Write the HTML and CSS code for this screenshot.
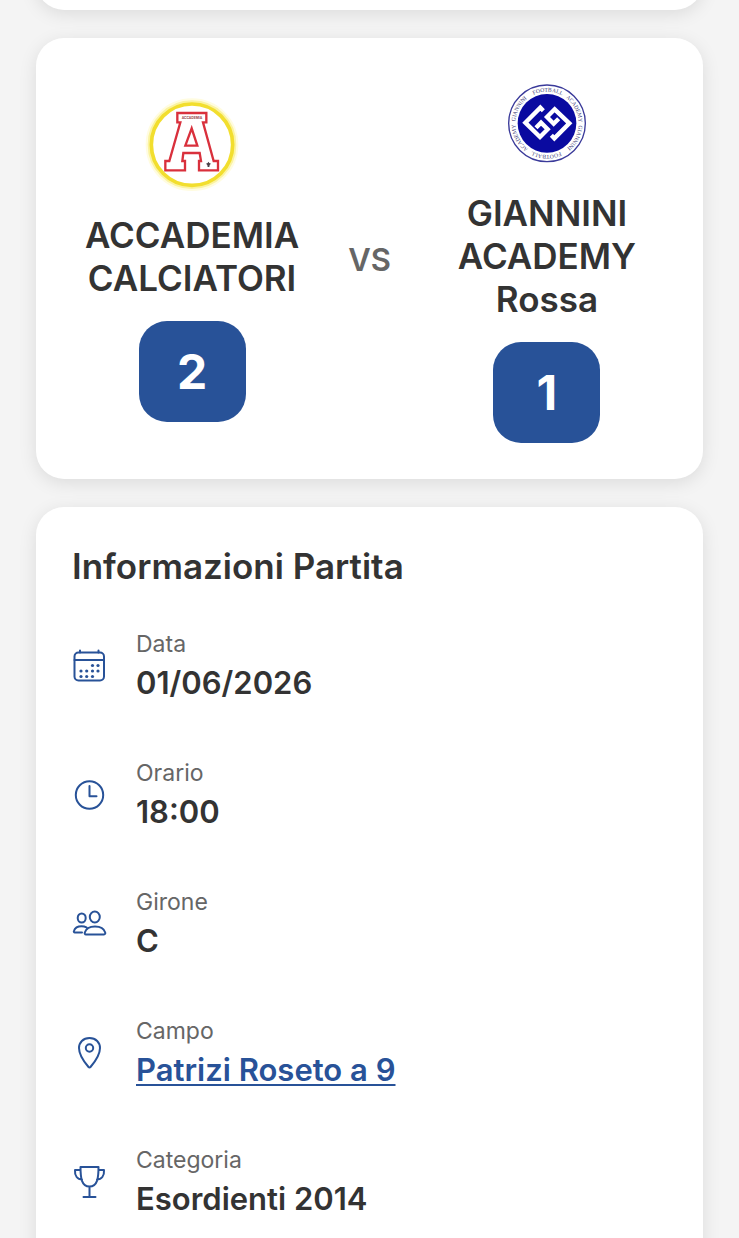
FILE: index.html
```html
<!DOCTYPE html>
<html lang="it">
<head>
<meta charset="utf-8">
<meta name="viewport" content="width=device-width, initial-scale=1">
<title>Dettaglio partita</title>
<link rel="stylesheet" href="styles.css">
</head>
<body>
<main class="page">
  <div class="card card-previous"></div>

  <section class="card match">
    <div class="team">
      <svg class="team-logo" viewBox="31 46 312 312" role="img" aria-label="Accademia Calciatori">
        <circle class="crest-halo" cx="187" cy="192" r="126"/>
        <circle class="crest-glow" cx="187" cy="192" r="125"/>
        <circle class="crest-ring" cx="187" cy="192" r="122"/>
        <path class="crest-letter" fill-rule="evenodd" d="M143 97H230V125H220L252 241H265V269H208V241H214L210 217H161L158 241H166V269H107V241H119L152 125H143ZM186 143L167 195H203Z"/>
        <text class="crest-name" x="187" y="114">ACCADEMIA</text>
        <path class="crest-mark" d="M236 243l3 4 5 2-4 4-1 6h-5l-1-6-4-4 5-2z"/>
      </svg>
      <h2 class="team-name">ACCADEMIA CALCIATORI</h2>
      <div class="score">2</div>
    </div>
    <div class="versus">VS</div>
    <div class="team">
      <svg class="team-logo" viewBox="15 12 312 312" role="img" aria-label="Giannini Football Academy">
        <defs><path id="ring" d="M76 160A95 95 0 0 1 266 160A95 95 0 0 1 76 160"/></defs>
        <circle class="badge-edge" cx="171" cy="160" r="115"/>
        <circle class="badge-core" cx="171" cy="160" r="88"/>
        <text class="badge-text"><textPath href="#ring" startOffset="1%">GIANNINI</textPath></text>
        <text class="badge-text"><textPath href="#ring" startOffset="18%">FOOTBALL</textPath></text>
        <text class="badge-text"><textPath href="#ring" startOffset="35%">ACADEMY</textPath></text>
        <text class="badge-text"><textPath href="#ring" startOffset="51%">GIANNINI</textPath></text>
        <text class="badge-text"><textPath href="#ring" startOffset="68%">FOOTBALL</textPath></text>
        <text class="badge-text"><textPath href="#ring" startOffset="85%">ACADEMY</textPath></text>
        <path class="badge-mono" d="M160 122L151 113L106 158L150 201L173 178L153 158L138 173M184 196L193 205L238 160L194 118L171 141L191 161L206 146"/>
      </svg>
      <h2 class="team-name">GIANNINI ACADEMY Rossa</h2>
      <div class="score">1</div>
    </div>
  </section>

  <section class="card info">
    <h1 class="info-title">Informazioni Partita</h1>
    <dl class="info-list">
      <div class="info-row">
        <svg class="icon" viewBox="0 0 36 36" aria-hidden="true"><rect x="2.500" y="4.500" width="29.500" height="28" rx="4"/><path d="M2.500 12H32M8 2.500V4.500M26.500 2.500V4.500"/><g class="dots"><circle cx="20.500" cy="17.500" r="1.600"/><circle cx="26" cy="17.500" r="1.600"/><circle cx="9" cy="23" r="1.600"/><circle cx="14.700" cy="23" r="1.600"/><circle cx="20.500" cy="23" r="1.600"/><circle cx="26" cy="23" r="1.600"/><circle cx="9" cy="28.500" r="1.600"/><circle cx="14.700" cy="28.500" r="1.600"/><circle cx="20.500" cy="28.500" r="1.600"/></g></svg>
        <div class="info-text"><dt>Data</dt><dd>01/06/2026</dd></div>
      </div>
      <div class="info-row">
        <svg class="icon" viewBox="0 0 36 36" aria-hidden="true"><circle cx="17.500" cy="18" r="13.700"/><path d="M17.500 9V19.300H24.500"/></svg>
        <div class="info-text"><dt>Orario</dt><dd>18:00</dd></div>
      </div>
      <div class="info-row">
        <svg class="icon" viewBox="0 0 36 36" aria-hidden="true"><ellipse cx="9.700" cy="12" rx="4" ry="4.600"/><ellipse cx="22.800" cy="11" rx="5" ry="5.500"/><path d="M14 28.500C12.800 28.500 12.500 27.500 12.800 26.500C14 22.500 18 20.500 23 20.500C28 20.500 32 22.500 33.200 26.500C33.500 27.500 33 28.500 32 28.500ZM10 26.500H2.800C2 26.500 1.600 25.800 1.900 25C3 21.800 6 20.300 9.500 20.300C11.500 20.300 13 20.600 14.500 21.300"/></svg>
        <div class="info-text"><dt>Girone</dt><dd>C</dd></div>
      </div>
      <div class="info-row">
        <svg class="icon" viewBox="0 0 36 36" aria-hidden="true"><path d="M17.500 3C11 3 7 7.500 7 13C7 20 13.500 28.500 16.500 32C17 32.700 18 32.700 18.500 32C21.500 28.500 28 20 28 13C28 7.500 24 3 17.500 3Z"/><circle cx="17.500" cy="13" r="3.700"/></svg>
        <div class="info-text"><dt>Campo</dt><dd><a href="#campo">Patrizi Roseto a 9</a></dd></div>
      </div>
      <div class="info-row">
        <svg class="icon" viewBox="0 0 36 36" aria-hidden="true"><path d="M8.500 3H26.500C26.500 14 25.500 22.500 17.500 22.500C9.500 22.500 8.500 14 8.500 3ZM8.500 6H3C2.500 12 5.500 15.500 10 15.500M26.500 6H32C32.500 12 29.500 15.500 25 15.500M17.500 22.500V33M11.500 33H23.500"/></svg>
        <div class="info-text"><dt>Categoria</dt><dd>Esordienti 2014</dd></div>
      </div>
    </dl>
  </section>
</main>
</body>
</html>
```
FILE: styles.css
```css
* {
  box-sizing: border-box;
}

body {
  margin: 0;
  background: #f4f4f4;
  color: #333333;
  font-family: Inter, "Liberation Sans", sans-serif;
}

.page {
  display: flex;
  flex-direction: column;
  gap: 28px;
  padding: 0 36px;
  overflow: hidden;
}

.card {
  padding: 36px;
  border-radius: 28px;
  background: #ffffff;
  box-shadow: 0 4px 18px rgba(0, 0, 0, 0.1);
}

.card-previous {
  height: 80px;
  margin-top: -70px;
}

.match {
  display: flex;
  align-items: center;
}

.team {
  display: flex;
  flex: 1;
  flex-direction: column;
  align-items: center;
  min-width: 0;
}

.team-logo {
  width: 104px;
  height: 104px;
  margin-bottom: 14px;
}

.team-name {
  margin: 0 0 21px;
  font-size: 35px;
  font-weight: 600;
  line-height: 43px;
  text-align: center;
}

.score {
  min-width: 107px;
  padding: 21px 28px;
  border-radius: 28px;
  background: #285298;
  color: #ffffff;
  font-size: 48px;
  font-weight: 700;
  line-height: 59px;
  text-align: center;
}

.versus {
  padding: 2px 36px 0;
  color: #666666;
  font-size: 31px;
  font-weight: 600;
  line-height: 39px;
}

.info {
  padding-bottom: 64px;
}

.info-title {
  margin: 0 0 41px;
  font-size: 35px;
  font-weight: 600;
  line-height: 46px;
}

.info-list {
  display: flex;
  flex-direction: column;
  gap: 57px;
  margin: 0;
}

.info-row {
  display: flex;
  align-items: center;
  gap: 28px;
}

.icon {
  flex: none;
  width: 36px;
  height: 36px;
  fill: none;
  stroke: #285298;
  stroke-width: 2;
  stroke-linecap: round;
  stroke-linejoin: round;
}

.icon .dots {
  fill: #285298;
  stroke: none;
}

.info-text dt {
  margin-bottom: 4px;
  color: #666666;
  font-size: 23px;
  line-height: 29px;
}

.info-text dd {
  margin: 0;
  font-size: 31px;
  font-weight: 600;
  line-height: 39px;
}

.info-text a {
  color: #285298;
  text-decoration-thickness: 2px;
  text-underline-offset: 3px;
  text-decoration-skip-ink: none;
}

.crest-halo {
  fill: none;
  stroke: #fffce0;
  stroke-width: 26;
}

.crest-glow {
  fill: none;
  stroke: #fbf3a0;
  stroke-width: 16;
}

.crest-ring {
  fill: #ffffff;
  stroke: #f2de2e;
  stroke-width: 11;
}

.crest-letter {
  fill: #ffffff;
  stroke: #d9303c;
  stroke-width: 7;
}

.crest-name {
  fill: #9a4a50;
  font-size: 10px;
  font-weight: 700;
  text-anchor: middle;
}

.crest-mark {
  fill: #4a4048;
}

.badge-edge {
  fill: #ffffff;
  stroke: #3a3a9a;
  stroke-width: 4;
}

.badge-core {
  fill: #0a0aa0;
}

.badge-text {
  fill: #3c3c78;
  font-family: "Liberation Serif", serif;
  font-size: 17px;
}

.badge-mono {
  fill: none;
  stroke: #ffffff;
  stroke-width: 13;
}
```
